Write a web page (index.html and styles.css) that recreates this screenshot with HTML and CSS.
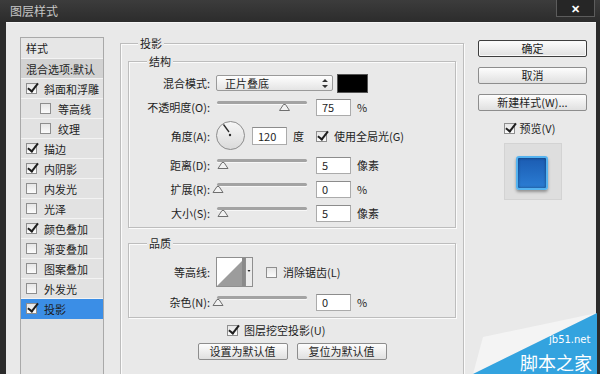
FILE: index.html
```html
<!DOCTYPE html>
<html lang="zh-CN">
<head>
    <meta charset="UTF-8">
    <title>图层样式</title>
    <link rel="stylesheet" href="styles.css">
</head>
<body>
<div class="window">
    <div class="titlebar">
        <span class="title">图层样式</span>
        <span class="close">✕</span>
    </div>
    <div class="frame">
        <div class="body">
            <ul class="styles">
                <li class="head">样式</li>
                <li class="blend">混合选项:默认</li>
                <li><span class="cb on"></span>斜面和浮雕</li>
                <li class="sub"><span class="cb"></span>等高线</li>
                <li class="sub"><span class="cb"></span>纹理</li>
                <li><span class="cb on"></span>描边</li>
                <li><span class="cb on"></span>内阴影</li>
                <li><span class="cb"></span>内发光</li>
                <li><span class="cb"></span>光泽</li>
                <li><span class="cb on"></span>颜色叠加</li>
                <li><span class="cb"></span>渐变叠加</li>
                <li><span class="cb"></span>图案叠加</li>
                <li><span class="cb"></span>外发光</li>
                <li class="active"><span class="cb on"></span>投影</li>
            </ul>

            <section class="main group">
                <div class="group-title">投影</div>

                <div class="group struct">
                    <div class="group-title">结构</div>
                    <div class="rows">
                        <div class="row">
                            <label>混合模式:</label>
                            <div class="select">
                                <span>正片叠底</span>
                                <svg width="6" height="9" viewBox="0 0 6 9"><path d="M3 0 L6 3 L0 3 Z M3 9 L6 6 L0 6 Z" fill="#333"/></svg>
                            </div>
                            <span class="color"></span>
                        </div>
                        <div class="row">
                            <label>不透明度(O):</label>
                            <svg class="slider" width="92" height="20"><rect x="1" y="4" width="90" height="3" rx="1.5" fill="#a3a3a3"/><rect x="1" y="7" width="90" height="1" fill="#f7f7f7"/><path d="M67.5 7.5 L69.5 7.5 L73.5 13.5 L63.5 13.5 Z" fill="#f2f2f2" stroke="#6f6f6f"/></svg>
                            <span class="field">75</span>
                            <span class="unit">%</span>
                        </div>
                        <div class="row tall">
                            <label>角度(A):</label>
                            <svg class="dial" width="30" height="30"><defs><linearGradient id="dg" x1="0" y1="0" x2="0" y2="1"><stop offset="0" stop-color="#f7f7f7"/><stop offset="1" stop-color="#dadada"/></linearGradient></defs><circle cx="14.5" cy="14.5" r="14" fill="url(#dg)" stroke="#8c8c8c"/><path d="M7.5 3.5 L13 11" stroke="#2a2a2a" stroke-width="1.3"/><circle cx="14" cy="14" r="1.2" fill="#2a2a2a"/></svg>
                            <span class="field angle">120</span>
                            <span class="unit">度</span>
                            <span class="cb on global"></span>
                            <span>使用全局光(G)</span>
                        </div>
                        <div class="row">
                            <label>距离(D):</label>
                            <svg class="slider" width="92" height="20"><rect x="1" y="4" width="90" height="3" rx="1.5" fill="#a3a3a3"/><rect x="1" y="7" width="90" height="1" fill="#f7f7f7"/><path d="M6 7.5 L8 7.5 L12 13.5 L2 13.5 Z" fill="#f2f2f2" stroke="#6f6f6f"/></svg>
                            <span class="field">5</span>
                            <span class="unit">像素</span>
                        </div>
                        <div class="row">
                            <label>扩展(R):</label>
                            <svg class="slider" width="92" height="20"><rect x="1" y="4" width="90" height="3" rx="1.5" fill="#a3a3a3"/><rect x="1" y="7" width="90" height="1" fill="#f7f7f7"/><path d="M1 7.5 L3 7.5 L7 13.5 L-3 13.5 Z" fill="#f2f2f2" stroke="#6f6f6f"/></svg>
                            <span class="field">0</span>
                            <span class="unit">%</span>
                        </div>
                        <div class="row">
                            <label>大小(S):</label>
                            <svg class="slider" width="92" height="20"><rect x="1" y="4" width="90" height="3" rx="1.5" fill="#a3a3a3"/><rect x="1" y="7" width="90" height="1" fill="#f7f7f7"/><path d="M6 7.5 L8 7.5 L12 13.5 L2 13.5 Z" fill="#f2f2f2" stroke="#6f6f6f"/></svg>
                            <span class="field">5</span>
                            <span class="unit">像素</span>
                        </div>
                    </div>
                </div>

                <div class="group quality">
                    <div class="group-title">品质</div>
                    <div class="rows">
                        <div class="row tall">
                            <label>等高线:</label>
                            <svg class="contour" width="38" height="30"><rect x="0.5" y="0.5" width="29" height="29" fill="#fff" stroke="#8f8f8f"/><path d="M1 29 L29 1 L29 29 Z" fill="#9c9c9c"/><rect x="26" y="1" width="3" height="28" fill="#8a8a8a"/><rect x="29.5" y="0.5" width="7" height="29" fill="#ececec" stroke="#8f8f8f"/><path d="M31.5 13 L34.5 13 L33 15 Z" fill="#222"/></svg>
                            <span class="cb smooth"></span>
                            <span>消除锯齿(L)</span>
                        </div>
                        <div class="row">
                            <label>杂色(N):</label>
                            <svg class="slider" width="92" height="20"><rect x="1" y="4" width="90" height="3" rx="1.5" fill="#a3a3a3"/><rect x="1" y="7" width="90" height="1" fill="#f7f7f7"/><path d="M1 7.5 L3 7.5 L7 13.5 L-3 13.5 Z" fill="#f2f2f2" stroke="#6f6f6f"/></svg>
                            <span class="field">0</span>
                            <span class="unit">%</span>
                        </div>
                    </div>
                </div>

                <div class="knockout"><span class="cb on"></span>图层挖空投影(U)</div>
                <div class="defaults">
                    <span class="btn">设置为默认值</span>
                    <span class="btn">复位为默认值</span>
                </div>
            </section>

            <aside class="side">
                <span class="btn primary">确定</span>
                <span class="btn">取消</span>
                <span class="btn">新建样式(W)...</span>
                <div class="preview-check"><span class="cb on"></span>预览(V)</div>
                <div class="preview"><div class="preview-fx"></div></div>
            </aside>
        </div>
    </div>

    <svg class="watermark" width="127" height="64" viewBox="0 0 127 64">
        <path d="M3 64 L13 27 L127 3 Z" fill="#f4f4f4"/>
        <path d="M3 64 L127 3 L127 64 Z" fill="#33a3df"/>
        <text x="79" y="33" font-size="10" fill="#fff" font-family="DejaVu Sans, sans-serif">jb51.net</text>
        <text x="50" y="60" font-size="18" fill="#fff" font-family="Noto Sans CJK SC, sans-serif">脚本之家</text>
    </svg>
</div>
</body>
</html>
```

FILE: styles.css
```css
* {
    box-sizing: border-box;
}

body {
    margin: 0;
    width: 600px;
    height: 374px;
    overflow: hidden;
    font-family: "Noto Sans CJK SC", sans-serif;
    font-size: 11px;
    color: #1e1e1e;
    background: #2b2b2b;
}

.window {
    position: relative;
    height: 374px;
    display: flex;
    flex-direction: column;
}

.titlebar {
    height: 22px;
    display: flex;
    align-items: flex-start;
    background: linear-gradient(#3c3c3c, #2c2c2c);
}

.title {
    margin-left: 10px;
    line-height: 22px;
    font-size: 12px;
    color: #c6c6c6;
}

.close {
    margin-left: auto;
    margin-right: 5px;
    width: 39px;
    height: 17px;
    border: 1px solid #5c5c5c;
    border-top: 0;
    background: #262626;
    color: #fff;
    font-weight: bold;
    text-align: center;
    line-height: 16px;
}

.frame {
    flex: 1;
    min-height: 0;
    display: flex;
    padding: 0 4px 0 6px;
    background: #2b2b2b;
}

.body {
    flex: 1;
    display: flex;
    align-items: flex-start;
    padding: 14px 9px 0 14px;
    background: #e9e9e9;
    border-top: 1px solid #f6f6f6;
    overflow: hidden;
}

/* left style list */
.styles {
    list-style: none;
    margin: 0 0 -10px 0;
    padding: 0;
    width: 84px;
    align-self: stretch;
    border: 1px solid #a9a9a9;
    background: #e2e2e2;
    flex: none;
}

.styles li {
    height: 20px;
    display: flex;
    align-items: center;
    padding-left: 5px;
    border-bottom: 1px solid #f3f3f3;
    white-space: nowrap;
}

.styles .head {
    height: 21px;
    background: #e6e6e6;
}

.styles .blend {
    background: #d2d2d2;
}

.styles .sub {
    padding-left: 19px;
}

.styles .active {
    background: #3b8ee6;
    border-bottom-color: #3b8ee6;
}

/* checkbox */
.cb {
    position: relative;
    flex: none;
    width: 11px;
    height: 11px;
    margin-right: 7px;
    border: 1px solid #8e8e8e;
    background: linear-gradient(#e6e6e6, #fbfbfb);
}

.cb.on::after {
    content: "";
    position: absolute;
    left: 3px;
    top: -3px;
    width: 4px;
    height: 9px;
    border: solid #1e1e1e;
    border-width: 0 2px 2px 0;
    transform: rotate(38deg);
}

/* group boxes */
.group {
    border: 1px solid #bdbdbd;
    box-shadow: 1px 1px 0 #fbfbfb, inset 1px 1px 0 #fbfbfb;
}

.group-title {
    width: fit-content;
    margin: -9px 0 0 18px;
    padding: 0 2px;
    line-height: 16px;
    background: #e9e9e9;
}

.main {
    flex: none;
    width: 344px;
    margin: 6px 0 -20px 16px;
    align-self: stretch;
    padding: 0 7px;
}

.main > .group-title {
    margin-left: 10px;
}

.struct {
    margin-top: 10px;
}

.quality {
    margin-top: 15px;
}

.rows {
    display: flex;
    flex-direction: column;
    gap: 4px;
    padding: 4px 0 4px;
}

.quality .rows {
    gap: 5px;
    padding: 6px 0 5px;
}

.row {
    height: 20px;
    display: flex;
    align-items: center;
    white-space: nowrap;
}

.row.tall {
    height: 30px;
}

.row label {
    flex: none;
    width: 81px;
    margin-right: 6px;
    text-align: right;
}

.select {
    width: 117px;
    height: 16px;
    display: flex;
    align-items: center;
    justify-content: space-between;
    padding: 0 4px 0 8px;
    border: 1px solid #9a9a9a;
    border-radius: 2px;
    background: linear-gradient(#fefefe, #e4e4e4);
}

.color {
    width: 31px;
    height: 19px;
    margin-left: 4px;
    background: #000;
    border: 1px solid #555;
}

.slider {
    flex: none;
    overflow: visible;
}

.field {
    flex: none;
    width: 35px;
    height: 17px;
    margin-left: 8px;
    padding-left: 5px;
    line-height: 15px;
    background: #fff;
    border: 1px solid #ababab;
    border-top-color: #8c8c8c;
}

.field.angle {
    margin-left: 6px;
    height: 18px;
    line-height: 16px;
}

.unit {
    margin-left: 6px;
}

.cb.global {
    margin-left: 12px;
}

.cb.smooth {
    margin-left: 12px;
    margin-right: 6px;
}

.knockout {
    height: 16px;
    display: flex;
    align-items: center;
    margin: 4px 0 0 99px;
    white-space: nowrap;
}

.knockout .cb {
    margin-right: 6px;
}

.defaults {
    display: flex;
    justify-content: center;
    gap: 9px;
    margin-top: 5px;
}

.btn {
    display: block;
    width: 90px;
    height: 17px;
    border: 1px solid #8d8d8d;
    border-radius: 2px;
    background: linear-gradient(#fdfdfd, #e0e0e0);
    text-align: center;
    line-height: 15px;
    white-space: nowrap;
}

/* right column */
.side {
    flex: none;
    width: 109px;
    margin: 3px 0 0 14px;
    display: flex;
    flex-direction: column;
    align-items: center;
}

.side .btn {
    width: 109px;
    margin-bottom: 10px;
}

.side .btn.primary {
    border-color: #3e3e3e;
    box-shadow: inset 0 0 0 1px #fafafa;
}

.preview-check {
    height: 16px;
    margin: -1px 6px 0 0;
    display: flex;
    align-items: center;
}

.preview-check .cb {
    margin-right: 5px;
}

.preview {
    width: 58px;
    height: 57px;
    margin-top: 7px;
    display: flex;
    align-items: center;
    justify-content: center;
    background: #dedede;
    border: 1px solid #d3d3d3;
}

.preview-fx {
    width: 32px;
    height: 34px;
    margin: 3px 2px 0 0;
    border-radius: 3px;
    border: 2px solid #55b3f0;
    background: linear-gradient(#1b5cb2, #2b7dd4);
    box-shadow: 0 2px 3px rgba(0, 0, 0, 0.35), inset 0 0 3px rgba(0, 0, 0, 0.45);
}

.watermark {
    position: absolute;
    right: 3px;
    bottom: 0;
}
```
